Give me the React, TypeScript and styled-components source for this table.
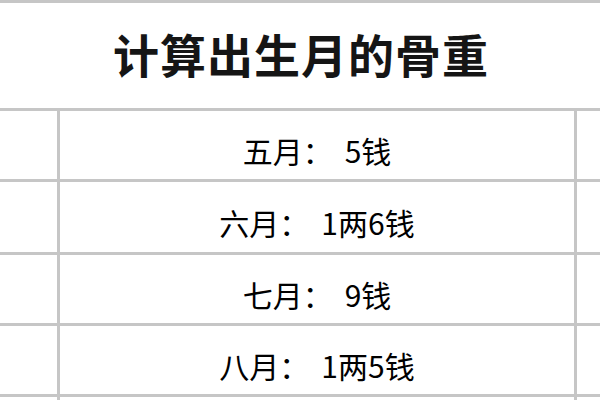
import React from "react";
import styled, { createGlobalStyle } from "styled-components";

const GlobalStyle = createGlobalStyle`
  html, body {
    margin: 0;
    padding: 0;
    background: #ffffff;
  }
  body {
    font-family: "Noto Sans CJK SC", "Noto Sans", sans-serif;
    color: #111111;
  }
`;

const LINE = "#c6c6c6";

const Page = styled.div`
  width: 600px;
  height: 400px;
  overflow: hidden;
  background: #ffffff;
  border-top: 3px solid ${LINE};
  box-sizing: border-box;
`;

const Title = styled.h1`
  margin: 0;
  height: 108px;
  box-sizing: border-box;
  display: flex;
  align-items: center;
  justify-content: center;
  padding: 0 0 5px 2px;
  font-size: 46px;
  font-weight: 700;
  letter-spacing: 1px;
  color: #151515;
  border-bottom: 3px solid ${LINE};
`;

const Row = styled.div<{ $h: number }>`
  display: grid;
  grid-template-columns: 60px 517px 1fr;
  height: ${(p) => p.$h}px;
  box-sizing: border-box;
  border-bottom: 3px solid ${LINE};
`;

const SideCell = styled.div<{ $right?: boolean }>`
  box-sizing: border-box;
  border-right: ${(p) => (p.$right ? "none" : `3px solid ${LINE}`)};
`;

const MainCell = styled.div`
  box-sizing: border-box;
  border-right: 3px solid ${LINE};
  display: flex;
  align-items: center;
  justify-content: center;
  padding-top: 10px;
  padding-left: 0;
  font-size: 30px;
  color: #000000;
  white-space: nowrap;
`;

const Colon = styled.span`
  margin-right: 12px;
`;

const rows = [
  { m: "五月", w: "5钱", h: 71 },
  { m: "六月", w: "1两6钱", h: 73 },
  { m: "七月", w: "9钱", h: 71 },
  { m: "八月", w: "1两5钱", h: 71 },
  { m: "", w: "", h: 71 },
];

export default function App() {
  return (
    <>
      <GlobalStyle />
      <Page>
        <Title>计算出生月的骨重</Title>
        {rows.map((r, i) => (
          <Row key={i} $h={r.h}>
            <SideCell />
            <MainCell>
              {r.m && (
                <>
                  {r.m}
                  <Colon>：</Colon>
                  {r.w}
                </>
              )}
            </MainCell>
            <SideCell $right />
          </Row>
        ))}
      </Page>
    </>
  );
}
